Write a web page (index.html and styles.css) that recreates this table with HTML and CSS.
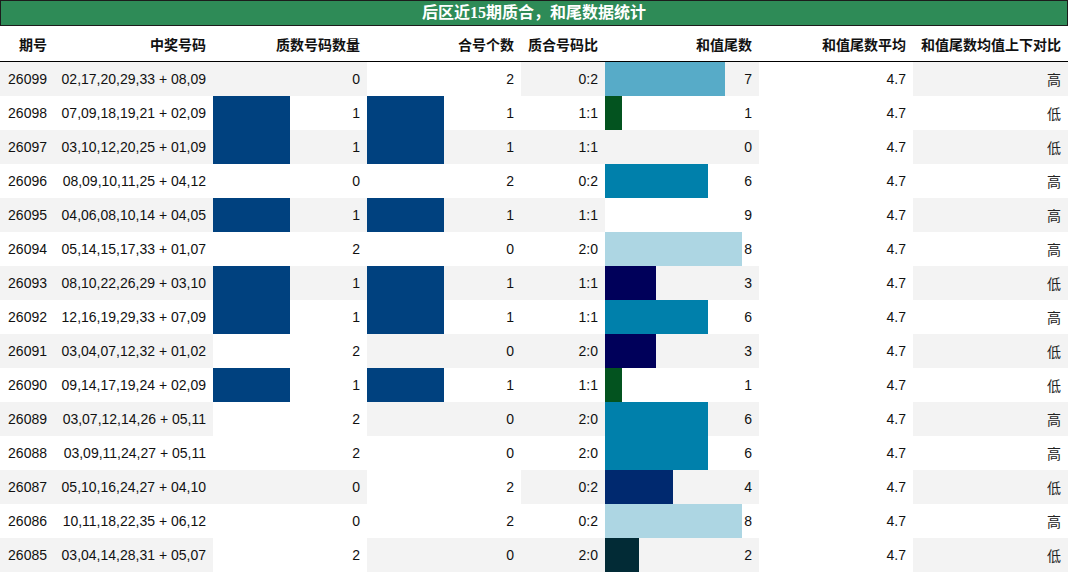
FILE: index.html
```html
<!DOCTYPE html>
<html lang="zh">
<head>
<meta charset="utf-8">
<title>后区近15期质合，和尾数据统计</title>
<link rel="stylesheet" href="styles.css">
</head>
<body>
<div class="title">后区近15期质合，和尾数据统计</div>
<table class="stats">
  <colgroup>
    <col class="c-issue"><col class="c-nums"><col class="c-std"><col class="c-std"><col class="c-ratio"><col class="c-std"><col class="c-std"><col class="c-last">
  </colgroup>
  <thead>
    <tr><th>期号</th><th>中奖号码</th><th>质数号码数量</th><th>合号个数</th><th>质合号码比</th><th>和值尾数</th><th>和值尾数平均</th><th>和值尾数均值上下对比</th></tr>
  </thead>
  <tbody>
    <tr><td>26099</td><td>02,17,20,29,33 + 08,09</td><td>0</td><td class="full">2</td><td>0:2</td><td class="bar" style="--w:77.78%;--c:#57abc8">7</td><td class="full">4.7</td><td class="cjk">高</td></tr>
    <tr><td>26098</td><td>07,09,18,19,21 + 02,09</td><td class="bar half">1</td><td class="bar half">1</td><td>1:1</td><td class="bar" style="--w:11.11%;--c:#03531f">1</td><td class="full">4.7</td><td class="cjk">低</td></tr>
    <tr><td>26097</td><td>03,10,12,20,25 + 01,09</td><td class="bar half">1</td><td class="bar half">1</td><td>1:1</td><td>0</td><td class="full">4.7</td><td class="cjk">低</td></tr>
    <tr><td>26096</td><td>08,09,10,11,25 + 04,12</td><td>0</td><td class="full">2</td><td>0:2</td><td class="bar" style="--w:66.67%;--c:#0080ab">6</td><td class="full">4.7</td><td class="cjk">高</td></tr>
    <tr><td>26095</td><td>04,06,08,10,14 + 04,05</td><td class="bar half">1</td><td class="bar half">1</td><td>1:1</td><td class="full">9</td><td class="full">4.7</td><td class="cjk">高</td></tr>
    <tr><td>26094</td><td>05,14,15,17,33 + 01,07</td><td class="full">2</td><td>0</td><td>2:0</td><td class="bar" style="--w:88.89%;--c:#add6e3">8</td><td class="full">4.7</td><td class="cjk">高</td></tr>
    <tr><td>26093</td><td>08,10,22,26,29 + 03,10</td><td class="bar half">1</td><td class="bar half">1</td><td>1:1</td><td class="bar" style="--w:33.33%;--c:#00005a">3</td><td class="full">4.7</td><td class="cjk">低</td></tr>
    <tr><td>26092</td><td>12,16,19,29,33 + 07,09</td><td class="bar half">1</td><td class="bar half">1</td><td>1:1</td><td class="bar" style="--w:66.67%;--c:#0080ab">6</td><td class="full">4.7</td><td class="cjk">高</td></tr>
    <tr><td>26091</td><td>03,04,07,12,32 + 01,02</td><td class="full">2</td><td>0</td><td>2:0</td><td class="bar" style="--w:33.33%;--c:#00005a">3</td><td class="full">4.7</td><td class="cjk">低</td></tr>
    <tr><td>26090</td><td>09,14,17,19,24 + 02,09</td><td class="bar half">1</td><td class="bar half">1</td><td>1:1</td><td class="bar" style="--w:11.11%;--c:#03531f">1</td><td class="full">4.7</td><td class="cjk">低</td></tr>
    <tr><td>26089</td><td>03,07,12,14,26 + 05,11</td><td class="full">2</td><td>0</td><td>2:0</td><td class="bar" style="--w:66.67%;--c:#0080ab">6</td><td class="full">4.7</td><td class="cjk">高</td></tr>
    <tr><td>26088</td><td>03,09,11,24,27 + 05,11</td><td class="full">2</td><td>0</td><td>2:0</td><td class="bar" style="--w:66.67%;--c:#0080ab">6</td><td class="full">4.7</td><td class="cjk">高</td></tr>
    <tr><td>26087</td><td>05,10,16,24,27 + 04,10</td><td>0</td><td class="full">2</td><td>0:2</td><td class="bar" style="--w:44.44%;--c:#00296f">4</td><td class="full">4.7</td><td class="cjk">低</td></tr>
    <tr><td>26086</td><td>10,11,18,22,35 + 06,12</td><td>0</td><td class="full">2</td><td>0:2</td><td class="bar" style="--w:88.89%;--c:#add6e3">8</td><td class="full">4.7</td><td class="cjk">高</td></tr>
    <tr><td>26085</td><td>03,04,14,28,31 + 05,07</td><td class="full">2</td><td>0</td><td>2:0</td><td class="bar" style="--w:22.22%;--c:#022b36">2</td><td class="full">4.7</td><td class="cjk">低</td></tr>
  </tbody>
</table>
</body>
</html>
```
FILE: styles.css
```css
html, body {
  margin: 0;
  padding: 0;
  background: #ffffff;
}

body {
  width: 1068px;
  font-family: "Liberation Sans", "Noto Sans CJK SC", sans-serif;
  font-size: 14px;
  color: #111;
}

.title {
  height: 24px;
  line-height: 24px;
  border: 1px solid #1c1c1c;
  background: #2e8b57;
  color: #ffffff;
  text-align: center;
  font-family: "Liberation Serif", "Noto Sans CJK SC", serif;
  font-weight: bold;
  font-size: 16px;
}

.stats {
  width: 1068px;
  table-layout: fixed;
  border-collapse: collapse;
  border-spacing: 0;
}

.c-issue { width: 54px; }
.c-nums { width: 159px; }
.c-std { width: 154px; }
.c-ratio { width: 84px; }
.c-last { width: 155px; }

.stats th {
  height: 35px;
  padding: 0 7px;
  text-align: right;
  font-family: "Noto Sans CJK SC", sans-serif;
  font-weight: bold;
  font-size: 14px;
  color: #111;
  border-bottom: 1px solid #000;
  white-space: nowrap;
}

.stats td {
  height: 34px;
  padding: 0 7px;
  text-align: right;
  white-space: nowrap;
  line-height: 16px;
}

.stats tbody tr:nth-child(odd) td {
  background-color: #f3f3f3;
}

.stats tbody tr td.full {
  background: #ffffff;
}

.stats tbody tr td.bar {
  background-image: linear-gradient(90deg, var(--c) var(--w), transparent var(--w));
}

.stats tbody tr td.half {
  --w: 50%;
  --c: #00417f;
}

.stats td.cjk {
  font-family: "Noto Sans CJK SC", sans-serif;
  color: #222;
}
```
